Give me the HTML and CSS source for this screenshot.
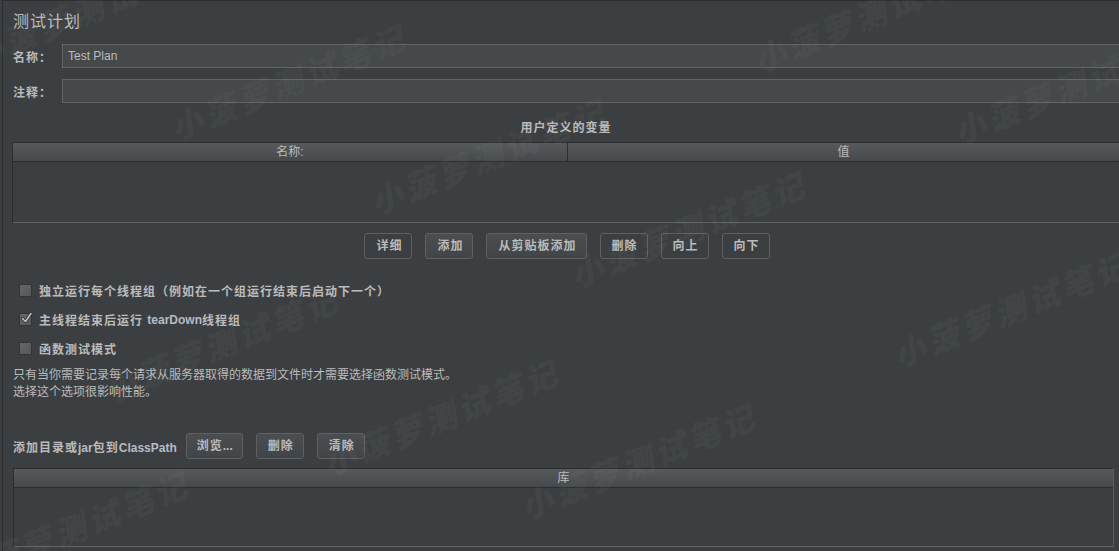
FILE: index.html
```html
<!DOCTYPE html>
<html lang="zh">
<head>
<meta charset="utf-8">
<title>测试计划</title>
<link rel="stylesheet" href="styles.css">
</head>
<body>
<div class="frame">
  <h1 class="title">测试计划</h1>
  <div class="field">
    <span class="field-label">名称：</span>
    <div class="input">Test Plan</div>
  </div>
  <div class="field">
    <span class="field-label">注释：</span>
    <div class="input"></div>
  </div>
  <div class="section-title">用户定义的变量</div>
  <div class="table vars">
    <div class="thead">
      <div class="th first">名称:</div>
      <div class="th">值</div>
    </div>
    <div class="tbody"></div>
  </div>
  <div class="btn-row">
    <button class="btn">详细</button>
    <button class="btn lit">添加</button>
    <button class="btn lit">从剪贴板添加</button>
    <button class="btn">删除</button>
    <button class="btn">向上</button>
    <button class="btn">向下</button>
  </div>
  <div class="checks">
    <div class="check"><span class="box"></span>独立运行每个线程组（例如在一个组运行结束后启动下一个）</div>
    <div class="check"><span class="box checked"><svg viewBox="0 0 13 13" width="13" height="13"><polyline points="2.5,6.5 5.5,9.5 11,1.5" fill="none" stroke="#2a2b2c" stroke-width="3" stroke-linecap="round" stroke-linejoin="round"/><polyline points="2.5,6.5 5.5,9.5 11,1.5" fill="none" stroke="#c8c8c8" stroke-width="1.5" stroke-linecap="round" stroke-linejoin="round"/></svg></span>主线程结束后运行 <span class="latin">tearDown</span>线程组</div>
    <div class="check"><span class="box"></span>函数测试模式</div>
  </div>
  <p class="note">只有当你需要记录每个请求从服务器取得的数据到文件时才需要选择函数测试模式。<br>选择这个选项很影响性能。</p>
  <div class="cp-row">
    <span class="cp-label">添加目录或<span class="latin">jar</span>包到<span class="latin">ClassPath</span></span>
    <button class="btn lit browse">浏览<span class="latin">...</span></button>
    <button class="btn lit">删除</button>
    <button class="btn lit">清除</button>
  </div>
  <div class="table lib">
    <div class="thead">
      <div class="th">库</div>
    </div>
    <div class="tbody"></div>
  </div>
</div>
<div class="wm-layer">
  <span class="wm w1">小菠萝测试笔记</span>
  <span class="wm w2">小菠萝测试笔记</span>
  <span class="wm w3">小菠萝测试笔记</span>
  <span class="wm w4">小菠萝测试笔记</span>
  <span class="wm w5">小菠萝测试笔记</span>
  <span class="wm w6">小菠萝测试笔记</span>
  <span class="wm w7">小菠萝测试笔记</span>
  <span class="wm w8">小菠萝测试笔记</span>
  <span class="wm w9">小菠萝测试笔记</span>
  <span class="wm w10">小菠萝测试笔记</span>
  <span class="wm w11">小菠萝测试笔记</span>
</div>
</body>
</html>
```
FILE: styles.css
```css
* { box-sizing: border-box; }
html, body { margin: 0; padding: 0; }
body {
  position: relative;
  width: 1119px;
  height: 551px;
  overflow: hidden;
  background: #3c3f41;
  color: #bbbbbb;
  font-family: "Liberation Sans", "Noto Sans CJK SC", sans-serif;
  font-size: 12px;
}
.frame {
  margin-left: 2px;
  height: 551px;
  border-left: 1px solid #2b2d2e;
  border-top: 1px solid #2b2d2e;
  padding-left: 10px;
}
.title {
  margin: 0;
  padding-top: 11px;
  font-size: 16px;
  line-height: 20px;
  font-weight: normal;
  letter-spacing: 1px;
}
.field {
  display: flex;
  align-items: center;
  height: 24px;
  margin-top: 12px;
  margin-right: -30px;
}
.field + .field { margin-top: 11px; }
.field-label {
  width: 49px;
  font-weight: bold;
  letter-spacing: 1px;
}
.input {
  flex: 1;
  height: 24px;
  background: #45494a;
  border: 1px solid #646464;
  padding-left: 5px;
  line-height: 22px;
  color: #b9bcc2;
}
.section-title {
  margin-top: 17px;
  text-align: center;
  font-weight: bold;
  letter-spacing: 1px;
  line-height: 16px;
}
.table {
  border-left: 1px solid #2b2d2e;
}
.table.vars {
  margin-top: 6px;
  margin-left: -1px;
}
.table.lib {
  margin-top: 9px;
  margin-right: 5px;
  border-right: 1px solid #5a5d60;
}
.thead {
  display: flex;
  height: 20px;
  border-top: 1px solid #2b2d2e;
  border-bottom: 1px solid #2b2d2e;
  background: linear-gradient(#565a5d, #46494b);
}
.th {
  flex: 1;
  text-align: center;
  line-height: 18px;
}
.th.first {
  flex: 0 0 555px;
  border-right: 1px solid #2b2d2e;
}
.vars .tbody {
  height: 61px;
  border-bottom: 1px solid #616466;
}
.lib .tbody {
  height: 59px;
  border-bottom: 1px solid #616466;
}
.btn-row {
  display: flex;
  justify-content: center;
  gap: 13px;
  margin-top: 10px;
  padding-left: 2px;
}
.btn {
  height: 26px;
  margin: 0;
  padding: 0 9px 0 11px;
  border: 1px solid #5e6163;
  border-radius: 3px;
  background: #3c3f41;
  color: #bbbbbb;
  font-family: "Liberation Sans", "Noto Sans CJK SC", sans-serif;
  font-size: 12px;
  font-weight: bold;
  letter-spacing: 1px;
  line-height: 24px;
}
.btn.lit { background: linear-gradient(#4b4e50, #424547); }
.btn.browse { padding: 0 9px 0 10px; }
.latin { letter-spacing: 0; }
.checks { margin-top: 17px; }
.check {
  display: flex;
  align-items: center;
  height: 29px;
  padding-left: 6px;
  font-weight: bold;
  letter-spacing: 1px;
  white-space: pre;
}
.check .latin { color: #b6bcc6; }
.box {
  flex: 0 0 13px;
  width: 13px;
  height: 13px;
  margin-right: 7px;
  border: 1px solid #323436;
  border-radius: 1px;
  background: linear-gradient(135deg, #65686a, #55585a);
  position: relative;
}
.box svg {
  position: absolute;
  left: 0;
  top: -2px;
}
.note {
  margin: 4px 0 0;
  line-height: 17px;
}
.cp-row {
  display: flex;
  align-items: center;
  gap: 13px;
  margin-top: 32px;
}
.cp-label {
  font-weight: bold;
  letter-spacing: 1px;
  margin-right: -4px;
}
.cp-label .latin { color: #b6bcc6; }
.wm-layer {
  position: absolute;
  inset: 0;
  overflow: hidden;
  pointer-events: none;
}
.wm {
  position: absolute;
  font-family: "Noto Sans CJK SC", sans-serif;
  font-size: 32px;
  font-weight: 900;
  font-style: italic;
  letter-spacing: 4px;
  line-height: 32px;
  white-space: nowrap;
  color: rgba(255, 255, 255, 0.055);
  transform-origin: 0 100%;
  transform: rotate(-22deg);
}
.w1 { left: -23px; top: 38px; }
.w2 { left: 177px; top: 111px; }
.w3 { left: 377px; top: 185px; }
.w4 { left: 577px; top: 258px; }
.w5 { left: 760px; top: 43px; }
.w6 { left: 960px; top: 115px; }
.w7 { left: 900px; top: 338px; }
.w8 { left: 110px; top: 373px; }
.w9 { left: 527px; top: 490px; }
.w10 { left: -40px; top: 558px; }
.w11 { left: 330px; top: 446px; }
```
